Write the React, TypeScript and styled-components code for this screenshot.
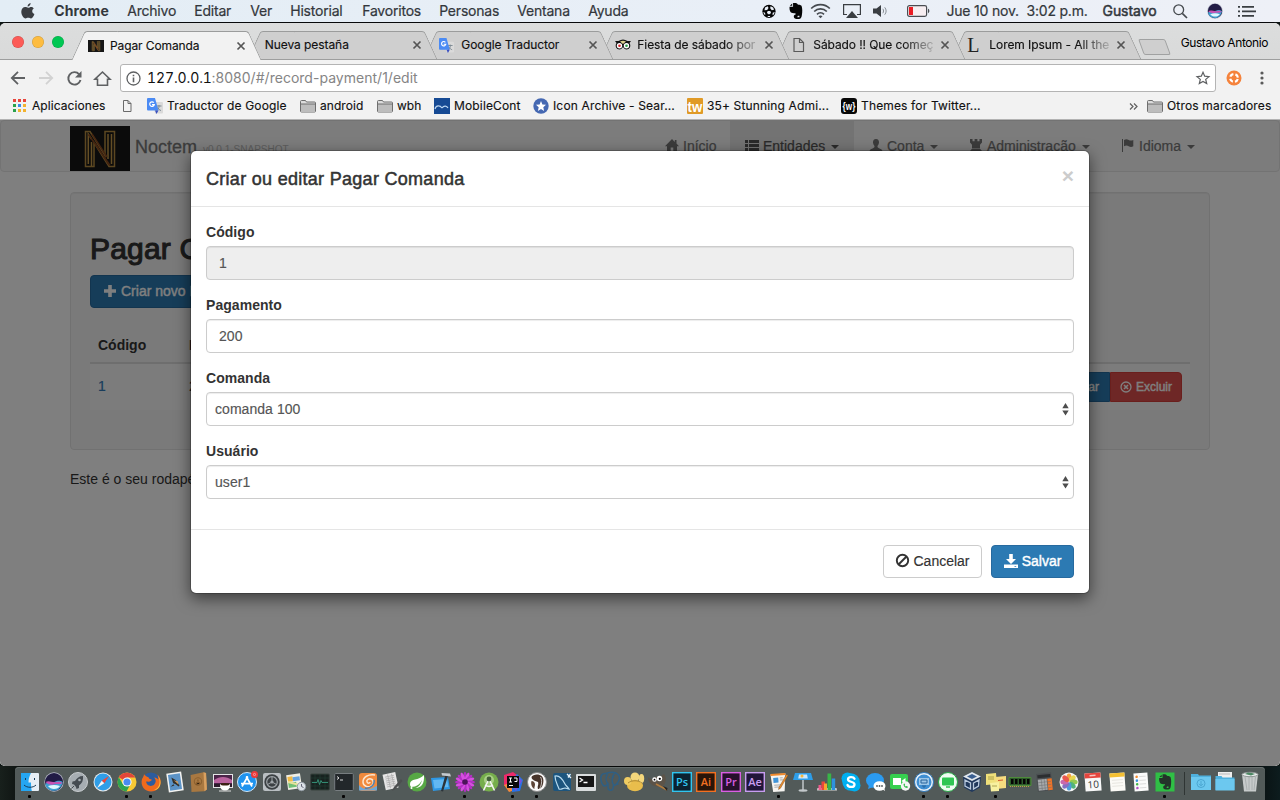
import React from "react";
import styled, { createGlobalStyle } from "styled-components";

const GlobalStyle = createGlobalStyle`
  * { box-sizing: border-box; }
  body { margin: 0; overflow: hidden; background: #101715; }
  svg { display: block; flex: none; overflow: visible; }
`;

const ui = `"Inter", "Roboto", sans-serif`;
const helv = `"Liberation Sans", "DejaVu Sans", sans-serif`;

const Desktop = styled.div`
  width: 1280px;
  height: 800px;
  overflow: hidden;
  display: flex;
  flex-direction: column;
  background: #0e1614;
`;

/* ---------- macOS menu bar ---------- */
const MenuBar = styled.div`
  height: 22px;
  flex: none;
  display: flex;
  align-items: center;
  padding-left: 20.7px;
  background: linear-gradient(90deg, #e3edf5, #e9eff7 60%, #eef0f7);
  font: 14px/22px ${ui};
  color: #33373c;
  white-space: nowrap;
`;
const MenuItem = styled.span<{ $w: number; $bold?: boolean }>`
  flex: none;
  width: ${(p) => p.$w}px;
  height: 22px;
  display: flex;
  align-items: center;
  letter-spacing: ${(p) => (p.$bold ? "0.1px" : "-0.2px")};
  font-weight: ${(p) => (p.$bold ? 700 : 400)};
  -webkit-text-stroke: ${(p) => (p.$bold ? "0" : "0.2px #33373c")};
`;
const UserItem = styled(MenuItem)`
  letter-spacing: -0.05px;
  -webkit-text-stroke: 0.5px #33373c;
`;

/* ---------- Browser window ---------- */
const Window = styled.div`
  height: 744px;
  flex: none;
  display: flex;
  flex-direction: column;
  border-top: 1px solid #08090b;
  border-radius: 6px 6px 5px 5px;
  overflow: hidden;
  background: #fff;
`;
const TabStrip = styled.div`
  height: 37px;
  flex: none;
  display: flex;
  align-items: flex-end;
  position: relative;
  background: linear-gradient(#dcdddd, #d9dada);
  border-bottom: 1px solid #9d9e9e;
`;
const TrafficLights = styled.div`
  display: flex;
  gap: 8px;
  width: 72px;
  padding-left: 12px;
  align-self: flex-start;
  margin-top: 13px;
  flex: none;
`;
const Light = styled.i<{ $c: string }>`
  width: 12px;
  height: 12px;
  border-radius: 50%;
  background: ${(p) => p.$c};
  box-shadow: inset 0 0 0 0.5px rgba(0, 0, 0, 0.18);
`;
const Tab = styled.div<{ $active?: boolean; $z: number }>`
  position: relative;
  z-index: ${(p) => p.$z};
  flex: none;
  width: 189px;
  height: ${(p) => (p.$active ? 29 : 28)}px;
  margin-right: -13px;
  margin-bottom: ${(p) => (p.$active ? -1 : 0)}px;
  padding: 0 17.5px 0 ${(p) => (p.$active ? 16 : 15.3)}px;
  display: flex;
  align-items: center;
  font: 12px/28px ${ui};
  color: #111;
  &::before,
  &::after {
    content: "";
    position: absolute;
    z-index: -1;
    top: 0;
    bottom: 0;
    background: ${(p) => (p.$active ? "#f2f2f2" : "#cfcfcf")};
    border-top: 1px solid #9b9c9c;
  }
  &::before {
    left: 6px;
    width: 100px;
    border-left: 1px solid #9b9c9c;
    border-top-left-radius: 3px;
    transform: skewX(-24.5deg);
  }
  &::after {
    right: 6px;
    width: 130px;
    border-right: 1px solid #9b9c9c;
    border-top-right-radius: 3px;
    transform: skewX(24.5deg);
  }
`;
const TabIcon = styled.span`
  width: 22px;
  flex: none;
`;
const TabTitle = styled.span<{ $fade?: boolean; $ls?: number; $start?: boolean }>`
  flex: 1;
  min-width: 0;
  margin-left: ${(p) => (p.$start ? 1.5 : 0)}px;
  overflow: hidden;
  white-space: nowrap;
  letter-spacing: ${(p) => p.$ls ?? -0.07}px;
  -webkit-text-stroke: 0.15px #111;
  ${(p) => p.$fade && "mask-image: linear-gradient(90deg, #000 72%, transparent 102%);"}
`;
const TabClose = styled.span`
  width: 12px;
  margin-right: -1px;
  flex: none;
  display: flex;
  justify-content: flex-end;
  align-items: center;
`;
const LetterIcon = styled.span`
  display: block;
  font: 20px/28px "Liberation Serif", serif;
  color: #222;
`;
const NewTab = styled.i`
  width: 27px;
  height: 16px;
  margin: 0 0 4px 13px;
  flex: none;
  border: 1px solid #a0a1a1;
  border-radius: 2px;
  background: #cfcfcf;
  transform: skewX(20deg);
`;
const Profile = styled.span`
  margin-left: auto;
  margin-right: 12px;
  padding-bottom: 7px;
  font: 12px/18px ${ui};
  letter-spacing: -0.42px;
  white-space: nowrap;
  color: #000;
`;
const Toolbar = styled.div`
  height: 36px;
  flex: none;
  display: flex;
  align-items: center;
  padding-left: 10px;
  background: #f2f2f2;
`;
const NavButton = styled.span<{ $w: number }>`
  width: ${(p) => p.$w}px;
  flex: none;
`;
const Omnibox = styled.div`
  width: 1096px;
  height: 28px;
  flex: none;
  display: flex;
  align-items: center;
  padding: 0 5px 0 5px;
  border: 1px solid #b4b4b4;
  border-radius: 3px;
  background: #fff;
  font: 14px/26px ${ui};
  color: #858585;
`;
const Host = styled.span`
  width: 64.5px;
  margin-left: 6px;
  color: #111;
  font-feature-settings: "tnum";
  letter-spacing: -0.1px;
`;
const Path = styled.span`
  flex: 1;
  letter-spacing: 0.02px;
`;
const Extensions = styled.div`
  display: flex;
  align-items: center;
  gap: 18px;
  padding-left: 10px;
`;
const Bookmarks = styled.div`
  height: 24px;
  flex: none;
  display: flex;
  align-items: center;
  padding: 0 0 3px 12px;
  background: #f2f2f2;
  border-bottom: 1px solid #b3b3b3;
  font: 12px/16px ${ui};
  color: #111;
`;
const Bookmark = styled.span<{ $w?: number; $ls?: number }>`
  width: ${(p) => (p.$w ? p.$w + "px" : "auto")};
  flex: none;
  display: flex;
  align-items: center;
  gap: 4px;
  white-space: nowrap;
  letter-spacing: ${(p) => p.$ls ?? 0.15}px;
  -webkit-text-stroke: 0.15px #111;
`;
const Spacer = styled.span`
  flex: 1;
`;

/* ---------- Page ---------- */
const Viewport = styled.div`
  position: relative;
  flex: 1;
  min-height: 0;
  overflow: hidden;
  background: #fff;
  font: 14px/20px ${helv};
  color: #333;
`;
const Navbar = styled.nav`
  height: 52px;
  display: flex;
  padding-left: 69px;
  background: #f8f8f8;
  border: 1px solid #e7e7e7;
  border-radius: 4px;
  white-space: nowrap;
`;
const Brand = styled.div`
  display: flex;
  align-items: flex-start;
  width: 580px;
  padding-top: 5px;
  font-size: 18px;
  color: #777;
`;
const BrandName = styled.span`
  margin: 11px 0 0 5px;
  -webkit-text-stroke: 0.3px #777;
`;
const Version = styled.small`
  margin: 14px 0 0 6px;
  font-size: 10px;
  color: #bbb;
`;
const NavLink = styled.a<{ $w: number; $active?: boolean }>`
  width: ${(p) => p.$w}px;
  height: 50px;
  padding-left: 15px;
  display: flex;
  align-items: center;
  gap: 4px;
  color: ${(p) => (p.$active ? "#555" : "#777")};
  background: ${(p) => (p.$active ? "#e7e7e7" : "transparent")};
  -webkit-text-stroke: 0.2px currentColor;
`;
const Caret = styled.i`
  margin: 2px 0 0 2px;
  border: 4px solid transparent;
  border-bottom: 0;
  border-top-color: currentColor;
`;
const Well = styled.section`
  margin: 20px 70px 0;
  height: 258px;
  padding: 39px 19px 0;
  background: #f5f5f5;
  border: 1px solid #e3e3e3;
  border-radius: 4px;
  box-shadow: inset 0 1px 1px rgba(0, 0, 0, 0.05);
`;
const Heading = styled.h2`
  margin: 0 0 10px;
  font: 30px/33px ${helv};
  letter-spacing: 0.2px;
  -webkit-text-stroke: 1.1px #333;
`;
const Button = styled.button<{ $kind?: "primary" | "danger"; $w?: number; $small?: boolean }>`
  display: inline-flex;
  align-items: center;
  justify-content: center;
  gap: 4px;
  flex: none;
  width: ${(p) => (p.$w ? p.$w + "px" : "auto")};
  height: ${(p) => (p.$small ? 30 : 33)}px;
  padding: ${(p) => (p.$small ? "0 10px" : "0 12px 2px")};
  white-space: nowrap;
  font: ${(p) => (p.$small ? 12 : 14)}px/20px ${helv};
  border: 1px solid
    ${(p) => (p.$kind === "primary" ? "#276a9f" : p.$kind === "danger" ? "#d43f3a" : "#ccc")};
  border-radius: 4px;
  background: ${(p) => (p.$kind === "primary" ? "#2c7ab3" : p.$kind === "danger" ? "#dd4f4c" : "#fff")};
  color: ${(p) => (p.$kind ? "#fff" : "#333")};
  -webkit-text-stroke: ${(p) => (p.$kind ? "0.4px #fff" : "0.15px #333")};
`;
const Group = styled.div`
  display: flex;
  justify-content: flex-end;
  & > button:first-child { border-radius: 4px 0 0 4px; }
  & > button:last-child { border-radius: 0 4px 4px 0; }
`;
const Table = styled.div`
  margin-top: 19px;
`;
const Row = styled.div<{ $head?: boolean }>`
  display: grid;
  grid-template-columns: 91px 200px 1fr;
  padding: 8px;
  height: ${(p) => (p.$head ? 37 : 46)}px;
  font-weight: ${(p) => (p.$head ? 700 : 400)};
  border-bottom: ${(p) => (p.$head ? "2px solid #ddd" : "0")};
  background: ${(p) => (p.$head ? "transparent" : "#f9f9f9")};
  align-items: start;
`;
const Cell = styled.span`
  padding-top: 4px;
`;
const IdLink = styled.a`
  padding-top: 4px;
  color: #337ab7;
  -webkit-text-stroke: 0.2px #337ab7;
`;
const PageFooter = styled.p`
  margin: 19px 70px 0;
`;

/* ---------- Modal ---------- */
const Backdrop = styled.div`
  position: absolute;
  inset: 0;
  display: flex;
  justify-content: center;
  align-items: flex-start;
  padding-top: 30px;
  background: rgba(0, 0, 0, 0.5);
`;
const Dialog = styled.div`
  width: 900px;
  height: 444px;
  display: flex;
  flex-direction: column;
  border: 1px solid rgba(0, 0, 0, 0.2);
  border-radius: 6px;
  background: #fff;
  background-clip: padding-box;
  box-shadow: 0 5px 15px rgba(0, 0, 0, 0.5);
`;
const DialogHeader = styled.header`
  height: 56px;
  padding: 15px;
  display: flex;
  justify-content: space-between;
  border-bottom: 1px solid #e5e5e5;
`;
const DialogTitle = styled.h4`
  margin: 0;
  font: 18px/26px ${helv};
  letter-spacing: 0.29px;
  -webkit-text-stroke: 0.5px #333;
`;
const DialogClose = styled.span`
  margin-top: -1px;
  font: bold 21px/21px ${helv};
  color: #ccc;
`;
const DialogBody = styled.div`
  height: 322px;
  padding: 15px 15px 0;
`;
const Field = styled.label`
  display: block;
  margin-bottom: 15px;
  height: 58px;
  font-weight: 700;
  letter-spacing: 0.05px;
`;
const Control = styled.div<{ $readOnly?: boolean; $select?: boolean }>`
  height: 34px;
  margin-top: 4px;
  padding: 0 ${(p) => (p.$select ? 4 : 12)}px 0 ${(p) => (p.$select ? 8 : 12)}px;
  display: flex;
  align-items: center;
  justify-content: space-between;
  border: 1px solid #ccc;
  border-radius: 4px;
  box-shadow: inset 0 1px 1px rgba(0, 0, 0, 0.075);
  background: ${(p) => (p.$readOnly ? "#eee" : "#fff")};
  color: #555;
  font-weight: 400;
  letter-spacing: 0.05px;
  -webkit-text-stroke: 0.15px #555;
`;
const DialogFooter = styled.footer`
  flex: 1;
  padding: 15px;
  display: flex;
  gap: 9px;
  justify-content: flex-end;
  border-top: 1px solid #e5e5e5;
`;

/* ---------- Dock ---------- */
const DockArea = styled.div`
  flex: 1;
  padding: 1px 15px 0;
  background: linear-gradient(90deg, #18201c, #060808 3%, #060808 97%, #0d1c1e);
`;
const DockShelf = styled.div`
  height: 33px;
  display: flex;
  padding-left: 3px;
  border-radius: 4px 4px 0 0;
  background: #525a59;
  box-shadow: inset 0 1px 0 #68706f;
`;
const DockItem = styled.span<{ $open?: boolean; $w?: number }>`
  position: relative;
  width: ${(p) => p.$w ?? 24.17}px;
  flex: none;
  height: 33px;
  padding-top: 5px;
  display: flex;
  justify-content: center;
  &::after {
    content: "";
    position: absolute;
    left: calc(50% - 2px);
    top: 28px;
    width: 3px;
    height: 3px;
    border-radius: 1px;
    background: ${(p) => (p.$open ? "#050505" : "transparent")};
  }
`;
const DockDivider = styled.i`
  width: 1px;
  height: 23px;
  margin: 5px 4px 0 6px;
  background: #2f3534;
`;

/* ---------- Shared glyphs ---------- */
const Cross = () => (
  <svg width="8" height="8" viewBox="0 0 8 8" stroke="#555" strokeWidth="1.700"><path d="M.5.5l7 7M7.500.5l-7 7" /></svg>
);
const Translate = ({ s = 16 }: { s?: number }) => (
  <svg width={s} height={s} viewBox="0 0 16 16">
    <path d="M6 4h9a1 1 0 0 1 1 1v9.500a1 1 0 0 1-1 1H8z" fill="#dadada" />
    <path d="M9.500 8h5M12 7v1.500c0 2-1 3.500-2.500 4M10.500 9.500c.8 1.500 2 2.600 3.500 3" stroke="#7d8a93" fill="none" />
    <path d="M1 0h7l3.500 12.500H1a1 1 0 0 1-1-1V1a1 1 0 0 1 1-1z" fill="#4b8bf4" />
    <path d="M8 12.500h3.500L9.500 16z" fill="#3b50c0" />
    <path d="M6.800 4.600a2.300 2.300 0 1 0 .5 2H5" stroke="#fff" strokeWidth="1.200" fill="none" />
  </svg>
);
const Page = () => (
  <svg width="16" height="16" viewBox="0 0 16 16" fill="none" stroke="#5a5a5a" strokeWidth="1.200"><path d="M3 1.500h5.500l4 4v9H3zM8.500 1.500v4h4" /></svg>
);
const SmallPage = () => (
  <svg width="10" height="14" viewBox="0 0 10 14" fill="none" stroke="#6a6a6a"><path d="M1.500 1.500h4.500l3 3v8H1.500zM6 1.500v3h3" /></svg>
);
const Folder = () => (
  <svg width="16" height="14" viewBox="0 0 16 14" stroke="#6e6e6e"><path d="M.5 12V2.500a1 1 0 0 1 1-1h4l1 1.500h8a1 1 0 0 1 1 1v8a1 1 0 0 1-1 1h-13a1 1 0 0 1-1-1z" fill="#dcdcdc" /><path d="M1 5h14v8H1z" fill="#bdbdbd" stroke="none" /><path d="M.5 5h15" /></svg>
);
const Logo = ({ w, h }: { w: number; h: number }) => (
  <svg width={w} height={h} viewBox="0 0 60 45" fill="none" strokeWidth="1.500">
    <path d="M0 0h60v45H0z" fill="#161616" />
    <path d="M15.500 40.500V5.500h4.500l15 24V5.500h9.500v35h-5.500l-15-24v24z" stroke="#b98f42" />
    <path d="M18.300 38V8l3.200 5M21.500 40V16M38 33V8M41.500 38V8" stroke="#c99c4a" />
    <path d="M18.500 8.500L40 39.500M22 8l15 23M25 17l14 22" stroke="#8a4a20" />
  </svg>
);
const Elephant = ({ c }: { c: string }) => (
  <path d="M5.500 1v3.500H2.200C2 6 2.200 8.500 3.500 10c1.500.8 3 .8 4.300.6V12c-.9 0-1.700.6-1.600 1.800 0 1.300 1 2.200 2.600 2.200H11c2-.1 2.500-1.500 2.800-3.500.6-3.500.6-6-.3-9-1-.9-2.400-1-3.500-1.200C9.200.9 7.500.6 5.500 1zM2.400 3.600L4.700 1.300v2.300zM10 13h1.500v1.500H9.500z" fill={c} fillRule="evenodd" />
);
const SiriBall = () => (
  <>
    <circle cx="10" cy="10" r="9.700" fill="#b9bccb" />
    <circle cx="10" cy="10" r="9" fill="#211b45" />
    <path d="M1.300 12c4-3 6-1 9-2s5-2 8.300 0c-.5 5-4.500 8.800-8.600 8.800S2 16.500 1.300 12z" fill="#3f9fd0" />
    <path d="M1.500 10c4-2 7 1 11 0 3-.5 4 0 6 1-3 2-6 .5-9 1.500s-6-.5-8-2.500z" fill="#c752b4" />
    <path d="M4 14c4-1.500 8-1.500 12 0-2 3.500-9 4.500-12 0z" fill="#dff8ff" />
  </>
);

/* ---------- Page glyphs ---------- */
const G = ({ d, w = 14, h = 14, children }: { d?: string; w?: number; h?: number; children?: React.ReactNode }) => (
  <svg width={w} height={h} viewBox={`0 0 ${w} ${h}`} fill="currentColor">{d && <path d={d} fillRule="evenodd" />}{children}</svg>
);
const HOME = "M7 0L0 7.200h2V13h3.700V8.500h2.600V13H12V7.200h2L11.500 4.600V1H9.800v1.900z";
const LIST = "M0 1h3v3H0zM4 1h10v3H4zM0 5h3v3H0zM4 5h10v3H4zM0 9h3v3H0zM4 9h10v3H4z";
const USER = "M7 0C4.800 0 3.900 1.500 4 3.600c.1 1.600.8 2.700 1.500 3.500 0 1-.1 1.500-1 2C2.500 10 .6 10.500.4 13h13.200c-.2-2.500-2.100-3-4.100-3.900-.9-.5-1-1-1-2C9.200 6.300 9.900 5.200 10 3.600 10.100 1.500 9.200 0 7 0z";
const TOWER = "M1 0h2.500v2.300H5.600V0h2.800v2.300h2.100V0H13v3.500L11 5.800v3.400H3V5.800L1 3.500zM3 9.800h8L13 12v1.500H1V12z";
const FLAG = "M1 0h1v13H1zM3 1c2-1.200 3.300-.8 4.700 0S10.500 1.800 12.300 1v6.300c-1.600 1-3.200.8-4.600 0S5 6.100 3 7.300z";
const PLUS = "M5.200 1h3.600v4.200H13v3.600H8.800V13H5.200V8.800H1V5.200h4.200z";
const SAVE = "M5.200 0h3.600v5H12L7 10 2 5h3.200zM0 10.500h14V14H0zM10.500 12v.8h1.700V12z";

/* ---------- Dock icons, drawn on a 20 × 20 grid ---------- */
const Adobe = ({ t, c, b }: { t: string; c: string; b: string }) => (
  <>
    <rect x=".7" y=".7" width="18.600" height="18.600" fill={b} stroke={c} strokeWidth="1.400" />
    <text x="10" y="14" textAnchor="middle" fontFamily="Open Sans, sans-serif" fontWeight="600" fontSize="11" fill={c}>{t}</text>
  </>
);
const Tile = ({ c, r = 2 }: { c: string; r?: number }) => <rect x="1" y="1" width="18" height="18" rx={r} fill={c} />;
const Disc = ({ c, s = "none" }: { c: string; s?: string }) => <circle cx="10" cy="10" r="9.500" fill={c} stroke={s} />;
const petals = (n: number, colors: string[], rx: number, ry: number, off: number) =>
  Array.from({ length: n }, (_, i) => (
    <ellipse key={i} cx="10" cy={10 - off} rx={rx} ry={ry} fill={colors[i % colors.length]} transform={`rotate(${(i * 360) / n} 10 10)`} />
  ));

const dock: { icon: React.ReactNode; open?: boolean }[] = [
  { open: true, icon: <><Tile c="#e6eef5" r={1} /><path d="M1 1h10c-2 4-2.500 6-2.500 9.500H11c0 3 .2 6 .8 8.500H1z" fill="#25a6f2" /><path d="M5.500 6v2M14.500 6v2M4 13c3 3 9 3 12 0" stroke="#173a58" fill="none" /></> },
  { icon: <SiriBall /> },
  { icon: <><Disc c="#a6adb2" s="#c9cdd0" /><path d="M15 4c-4 0-6 2-8 5l-2.500.5L4 12l2 .5L8 15l.5 2 2.500-1v-2.500c3-2 4.500-5 4-9.500z" fill="#454c52" /><circle cx="11.500" cy="8" r="1.300" fill="#a6adb2" /><path d="M6 14l-2.500 2.500" stroke="#454c52" /></> },
  { icon: <><Disc c="#e8ebee" /><circle cx="10" cy="10" r="8.500" fill="#2f9ee8" /><path d="M16 4l-4.700 7.300-2.600-2.600z" fill="#f04438" /><path d="M4 16l4.700-7.300 2.600 2.600z" fill="#f6f6f6" /></> },
  { open: true, icon: <><Disc c="#f7c934" /><path d="M10 10L1.800 5.200A9.500 9.500 0 0 1 18.200 5.500H10z" fill="#e2463a" /><path d="M1.800 5.200A9.500 9.500 0 0 0 9.500 19.500L13.500 12 10 10 5.800 12z" fill="#2fa350" /><circle cx="10" cy="10" r="4.600" fill="#fff" /><circle cx="10" cy="10" r="3.600" fill="#4a8bf0" /></> },
  { open: true, icon: <><Disc c="#2c5c9e" /><path d="M3 2c0 2-1 3-2 5-2 7 3 12.500 9 12.500S20 15 19.700 9c-.2-3-1.500-5-3.500-6.500 1 2 1.200 3 1 5-1-1-2-2-4-2 2 2 2 5 0 7-3 3-8 1-8-3 1 0 2 .5 3.500 0 1-.5 2-1 2-2-1-.2-3-.5-3-2-1-1-3-.8-4.700-3.500z" fill="#ef6a1c" /><path d="M17 4c3 5 2 12-4 14 6 0 9-8 4-14z" fill="#ffc33a" /></> },
  { icon: <g transform="rotate(-8 10 10)"><path d="M2.500.500h15v19h-15z" fill="#f3f3f1" /><path d="M4 2h12v16H4z" fill="#5b93c7" /><path d="M7 5l4 3 3 6-1 1-3-3-2-1zM8 12l-3 2 4-.5z" fill="#33302b" /><path d="M9 8l4 2v3z" fill="#c79a62" /></g> },
  { icon: <g transform="rotate(-3 10 10)"><path d="M2 2.500l13-2 2.500 1V18l-2.500 1.500H2z" fill="#a87841" /><path d="M15 .5l2.500 1V18L15 19.500z" fill="#d8a060" /><circle cx="9" cy="9.500" r="3.700" fill="none" stroke="#8a5f2e" /><path d="M7 12c.4-2 3.600-2 4 0M9 7.500v2" stroke="#8a5f2e" strokeWidth="1.500" /></g> },
  { icon: <><path d="M0 2h20v14H0z" fill="#e4e4e6" /><path d="M1 3h18v12H1z" fill="#4a2448" /><path d="M1 8c6-4 12-4 18 0v3H1z" fill="#b9639e" /><path d="M1 12h18v3H1z" fill="#2d1b2c" /><path d="M7 12h10c0 5-2 6.500-5 6.500S7 17 7 12z" fill="#fff" /><ellipse cx="12" cy="12.300" rx="4.600" ry="1.300" fill="#3b2113" /><path d="M6 19h12" stroke="#ddd" /></> },
  { icon: <><Disc c="#1f93ee" s="#cfe6fa" /><path d="M5 14.500L10.800 4.500M9.200 4.500L15 14.500M4 11.700h12" stroke="#fff" strokeWidth="1.700" /><circle cx="17.500" cy="2.500" r="3.500" fill="#ea3a3a" /><circle cx="17.500" cy="2.500" r="1.100" fill="none" stroke="#fbb" strokeWidth=".7" /></> },
  { icon: <><Tile c="#b9bec2" /><circle cx="10" cy="10" r="7.700" fill="#3b4043" /><circle cx="10" cy="10" r="5.300" fill="none" stroke="#9fa5a9" strokeWidth="1.200" /><path d="M10 10V5M10 10l4.500 2.500M10 10l-4.500 2.500" stroke="#9fa5a9" /><circle cx="10" cy="10" r="1.600" fill="#9fa5a9" /></> },
  { icon: <><g transform="rotate(-8 9 9)"><path d="M1 2h14v15H1z" fill="#f0efe5" /><path d="M2 4h5v5H2z" fill="#f3bb45" /><path d="M7 5h7v4H7z" fill="#67a5e2" /><path d="M2 10h8v5H2z" fill="#70bf74" /><path d="M2 9l12 5" stroke="#e8e29c" strokeWidth="2" /></g><circle cx="15.500" cy="14.500" r="4.200" fill="#dde3e8" stroke="#929ba3" /><path d="M15.500 12v2.500l2 1" stroke="#667" fill="none" /></> },
  { icon: <><rect x=".7" y="2" width="18.600" height="16" rx="1" fill="#17221f" stroke="#39423f" /><path d="M1 6h18M1 10h18M1 14h18M5 2v16M10 2v16M15 2v16" stroke="#26463b" strokeWidth=".5" /><path d="M2 10.500h5l1-3 1.500 5 1.500-4 1 2h6" fill="none" stroke="#35957a" strokeWidth=".9" /></> },
  { open: true, icon: <><rect x=".7" y="1.500" width="18.600" height="17" rx="1" fill="#22272a" stroke="#777d80" /><path d="M3 4.500l2 1.500-2 1.500M6 8h3" fill="none" stroke="#eee" strokeWidth=".9" /></> },
  { icon: <><Tile c="#f08a3d" r={3} /><path d="M1 13c3 4 8 5 11 4l7-3v4.500H1z" fill="#6fa6d4" /><path d="M17 3c-7-1-12 2-12 7 0 4 5 6 8 4 3-1 3-6 0-7-2-1-5 1-4 3s3 1 3 0" fill="none" stroke="#fbe6cf" strokeWidth="1.500" /><path d="M16 8c1 5-4 9-9 8" fill="none" stroke="#4f7fb0" strokeWidth="1.500" /></> },
  { icon: <><g transform="rotate(-12 9 9)"><path d="M2 1h13v16H2z" fill="#e6e6e6" /><path d="M4 4h9M4 6h9M4 8h9M4 10h9M4 12h9M4 14h9M7 2v14M11 2v14" stroke="#b0b0b0" strokeWidth=".8" /></g><path d="M19 7l-7 8-2 4 3.500-2 7-8z" fill="#4d4f50" /></> },
  { icon: <><Disc c="#57a845" /><path d="M17 3c.5 8-2 13-9 13-3 0-5-1-5-4 0-6 9-3 14-9z" fill="#fff" /><path d="M4 15c6 0 9-3 11-7-1 5-5 9-10 8.500z" fill="#57a845" /><circle cx="4.500" cy="16" r="1" fill="#fff" /></> },
  { icon: <><path d="M0 6l17-1 2 12-17 2z" fill="#2e97e4" /><path d="M2 8l14-1 1.500 8L3.500 16.500z" fill="#62b8f2" /><path d="M14.500 2.500L10 19l2 .5 5-15.500z" fill="#2b333a" /><path d="M10.500 1L19 1.500l1 3-9-1z" fill="#c3c9ce" /></> },
  { open: true, icon: <>{petals(16, ["#b32fc4", "#d64fe0"], 1.600, 4.700, 5.200)}<circle cx="10" cy="10" r="2.800" fill="#4b1459" /></> },
  { icon: <><Disc c="#76ae4c" /><circle cx="10" cy="8" r="5" fill="#a8cf86" /><path d="M10 7L4.500 18.500M10 7l5.500 11.500M6 13c3 2 5 2 8 0" stroke="#f4f4f4" strokeWidth="1.600" fill="none" /><circle cx="10" cy="7" r="2.400" fill="#43603a" /></> },
  { open: true, icon: <><path d="M1 3l9-3 4 3-6 10-7 1z" fill="#ee2a6b" /><path d="M1 13l8-3 3 8-6 2z" fill="#f5893b" /><path d="M14 2l6 6-3 11-8 1V8z" fill="#2573e8" /><path d="M7 12l9-7 3 4-6 10z" fill="#7952d8" /><path d="M4 4h12v12H4z" fill="#0a0a0a" /><path d="M6 6h3M7.500 6v4M6 10h3M11 6h3v3.500H11.500M6 13.500h4" stroke="#fff" fill="none" /></> },
  { open: true, icon: <><Disc c="#fafafa" s="#8a8a8a" /><path d="M4.500 5c1-2 5-3 8-2 4 1 4.500 5 3.500 9-1 4-3 5-5 5-1-3 1-4 0-7l-4-1.500c-1-1-2.500-1.500-2.500-3.500z" fill="#47342a" /><path d="M4.500 9c2 0 3.500 1.500 3.500 3.500s-1 3-.5 4.500C5 16 3.500 12 4.500 9z" fill="#5c4436" /><path d="M13.500 5c2 3 1 9-1 12" stroke="#fff" strokeWidth=".7" fill="none" /></> },
  { icon: <><Tile c="#1d557e" /><path d="M3 4c5-1 8 4 10 8 1 2 3 3 4 5l-4-1c-2 0-4 2-6 1-1-4-4-7-4-13z" fill="none" stroke="#b9dcf0" strokeWidth="1.200" /><path d="M15 2l4 4M18.500 2L16 5.500" stroke="#e8f3fa" strokeWidth="1.300" /></> },
  { icon: <><rect x="0" y="2" width="20" height="17" rx="1" fill="#d9dcdd" /><path d="M2 4h16v11H2z" fill="#161616" /><path d="M3.500 6l3 2-3 2M7.500 10.500h4" stroke="#fff" fill="none" strokeWidth="1.300" /></> },
  { icon: <><path d="M6 1.500C2 1 0 4 1 8c.7 4 2 6 4 6 1 0 2-1.500 2.500-2.500M6 1.500C9 .5 15-.5 18 2.500s1 7-2 10c-1 1-2.500 1-2.500 1M7.500 2c-2 3-2 7 .5 9.500v4c0 3 4 4 5 1l.5-4c-2-2-2-8 1-11M9 5.500h1M13 5h1M16 12.500l2.500-.5" stroke="#2f5f83" strokeWidth="1.500" fill="none" /></> },
  { icon: <><ellipse cx="11" cy="5" rx="4.500" ry="4.500" fill="#f4d77c" /><ellipse cx="11" cy="13.500" rx="8" ry="5.800" fill="#e9bd4c" /><ellipse cx="3.700" cy="9" rx="3.700" ry="4" fill="#f0cc62" /><ellipse cx="17.500" cy="6.500" rx="2.700" ry="4.500" fill="#f4d77c" /><path d="M4 11c4-3 10-3 14 0" stroke="#9d792a" strokeWidth=".8" fill="none" /></> },
  { icon: <><path d="M0 5c2 2 3 2 5 2.500L7 5l6-1 3-2c3 4 2 9-1 12-4 1-9 1-12-2C1 10 0 8 0 5z" fill="#5c5348" /><circle cx="6.500" cy="7.500" r="2.200" fill="#fff" /><circle cx="11.500" cy="6.500" r="2.700" fill="#fff" /><circle cx="11.800" cy="6.800" r="1.100" /><circle cx="6.500" cy="7.700" r=".9" /><path d="M8 12l11 6" stroke="#b27b3d" strokeWidth="1.500" /><path d="M15 14l4 5 .5-3z" fill="#242424" /></> },
  { icon: <Adobe t="Ps" c="#31c5f0" b="#0c2230" /> },
  { icon: <Adobe t="Ai" c="#f37021" b="#2a1509" /> },
  { icon: <Adobe t="Pr" c="#d95fe3" b="#27102c" /> },
  { icon: <Adobe t="Ae" c="#c79df0" b="#21153a" /> },
  { open: true, icon: <g transform="rotate(-4 10 10)"><path d="M2 2h15l-2 17.500H3.500z" fill="#f6f4f0" /><path d="M2 1.500h15v2H2z" fill="#f08a2d" /><path d="M4.500 5.500h5v5h-5z" fill="#3f94d8" /><path d="M11 6h3M11 8h3M5 13h8M5 15h7" stroke="#aaa" /><path d="M18 3L9.500 15.500l-.5 2 2-1.200L19.500 4z" fill="#eb8c2c" stroke="#724415" strokeWidth=".4" /></g> },
  { icon: <><path d="M2 1h16l2 7H0z" fill="#2d9de8" /><path d="M6 2.500h8l.8 4H5.200z" fill="#cfe9fb" /><circle cx="9" cy="4" r="1.500" fill="#f4b63c" /><path d="M9.300 8h1.400v10H9.300z" fill="#c9ced2" /><ellipse cx="10" cy="18.500" rx="4.500" ry="1.200" fill="#c3c8cb" /></> },
  { icon: <><path d="M.5 16h19l.5 2.500H0z" fill="#d8d8d8" /><path d="M1.500 13h3v5h-3z" fill="#ee5a8c" /><path d="M4.500 9.500h3.500V18H4.500z" fill="#e9463c" /><path d="M7 11.500h3V18H7z" fill="#f6a72c" /><path d="M10.500 1.500h3.700V18h-3.700z" fill="#38b548" /><path d="M14.700 6.500h3.500V18h-3.500z" fill="#2e93df" /></> },
  { icon: <><circle cx="6.500" cy="6.500" r="6" fill="#00aff0" /><circle cx="13.500" cy="13.500" r="6" fill="#00aff0" /><circle cx="10" cy="10" r="8.700" fill="#00aff0" /><path d="M13.500 6.800C12.500 4.500 7 4.500 7 7.500S13.500 9 13.500 12.400 7.500 15.500 6.500 13" stroke="#fff" strokeWidth="2.300" fill="none" strokeLinecap="round" /></> },
  { icon: <><ellipse cx="9" cy="8.500" rx="9" ry="7.500" fill="#2b9bf1" /><path d="M3 13l-1 4 5-2z" fill="#2b9bf1" /><ellipse cx="13.500" cy="14" rx="6" ry="4.800" fill="#fff" /><path d="M16 17l3 2-1-4z" fill="#fff" /><g fill="#52585c"><circle cx="11" cy="14" r=".9" /><circle cx="13.500" cy="14" r=".9" /><circle cx="16" cy="14" r=".9" /></g></> },
  { icon: <><rect x="0" y="2" width="18" height="15" rx="2" fill="#36cf4f" /><path d="M3 6h8v7H3zM11.500 9l4-3v6z" fill="#fff" /><circle cx="15.500" cy="14" r="4.700" fill="#f3f5f3" /><path d="M13.500 12c0 2.500 1.500 4 4 4l.3-1.500-1.500-.6-.6.5-1-1 .4-.7-.5-1.200z" fill="#35b94c" /></> },
  { open: true, icon: <><Disc c="#e7f0f7" s="#2e78bb" /><circle cx="10" cy="10" r="7.500" fill="#3f8fd3" /><path d="M5 6h10v7H5z" fill="#9cc6e8" /><path d="M7 8h6v3H7zM9 13v2h2v-2" stroke="#28659c" fill="none" /></> },
  { open: true, icon: <><Disc c="#eafbee" s="#29a948" /><circle cx="10" cy="10" r="7.700" fill="#f1fcf3" /><rect x="4" y="5.500" width="12" height="8" rx="1" fill="#2fc653" /><path d="M8 15h4" stroke="#2fc653" strokeWidth="1.500" /></> },
  { icon: <><path d="M10 0l9 4.500-1 11L10 20l-8-4.500L1 4.500z" fill="#20385c" /><path d="M10 0l9 4.500L10 9 1 4.500z" fill="#e0e6ec" /><path d="M10 2l5 2.500L10 7 5 4.500z" fill="#3a5f91" /><path d="M3 8l5.500 3v6L3 14zM11.500 11L17 8l-.5 6-5 3z" fill="none" stroke="#b9c9dd" strokeWidth="1.300" /></> },
  { open: true, icon: <><path d="M0 2l10-1 1 11-11 1z" fill="#efe07a" /><path d="M9 5l11-1v12l-10 1z" fill="#f6dc7f" /><path d="M4 11l9-1v9l-8 .5z" fill="#f7f0a0" /><path d="M2 5h6M2 7h6M6 14h5" stroke="#9b8f3d" strokeWidth=".8" /><path d="M12 8.500l5-.5" stroke="#d2572f" /></> },
  { icon: <><path d="M-1 5.500h22v8H-1z" fill="#2c5a2a" stroke="#4f8a3b" /><path d="M1 7h2.500v5H1zM5 7h2.500v5H5zM9 7h2.500v5H9zM13 7h2.500v5H13zM17 7h2.500v5H17z" fill="#050505" /><path d="M0 14.500h20" stroke="#b8a540" strokeDasharray="1 1" /></> },
  { icon: <g transform="rotate(-6 10 10)"><path d="M2 1h15v18H2z" fill="#4b4f52" /><path d="M3 2.500h13v3H3z" fill="#2b2e30" /><path d="M3 7h9v11H3z" fill="#a6a9ab" /><path d="M12.500 7H17v11.500h-4.500z" fill="#ee7428" /><path d="M3 10h13M3 13h13M3 16h13M6.500 7v11M9.500 7v11" stroke="#6c6f71" strokeWidth=".5" /></g> },
  { icon: <><Disc c="#f5f5f5" /><g opacity=".9">{petals(8, ["#f59a2d", "#e9d53c", "#8ac440", "#3fae6e", "#3b93d6", "#7a62bd", "#c65aa5", "#e9483c"], 2.500, 4, 4.600)}</g></> },
  { icon: <g transform="rotate(-4 10 10)"><path d="M2 1h16v18H2z" fill="#f8f8f8" /><path d="M2 1h16v5H2z" fill="#e5453d" /><text x="10" y="16" textAnchor="middle" fontFamily="Open Sans, sans-serif" fontSize="10" fill="#333">10</text><path d="M7 3.500h6" stroke="#f9c3c0" strokeWidth="1.500" /></g> },
  { icon: <g transform="rotate(-4 10 10)"><path d="M3 1h15v18H3z" fill="#fbfaf6" /><path d="M3 1h15v4H3z" fill="#f4c033" /><path d="M5 8h11M5 11h11M5 14h11" stroke="#dedcd5" strokeWidth=".7" /></g> },
  { icon: <g transform="rotate(-4 10 10)"><path d="M3 1h14v18H3z" fill="#fbfbfb" /><g><circle cx="6" cy="4.500" r="1.300" fill="#f08b2e" /><circle cx="6" cy="8.300" r="1.300" fill="#3b93e0" /><circle cx="6" cy="12" r="1.300" fill="#43b649" /><circle cx="6" cy="15.800" r="1.300" fill="#b457c9" /></g><path d="M8.500 4.500H15M8.500 8.300H15M8.500 12H15M8.500 15.800H15" stroke="#d4d4d4" strokeWidth=".8" /></g> },
  { open: true, icon: <><path d="M.5.500h19v19H.5z" fill="#2fbf45" /><g transform="translate(2 1.500)"><Elephant c="#24332a" /></g></> },
];

const fields = [
  { label: "Código", value: "1", readOnly: true },
  { label: "Pagamento", value: "200" },
  { label: "Comanda", value: "comanda 100", select: true },
  { label: "Usuário", value: "user1", select: true },
];

const menus: [string, number][] = [
  ["Archivo", 67], ["Editar", 56], ["Ver", 40], ["Historial", 72], ["Favoritos", 77], ["Personas", 78], ["Ventana", 71], ["Ayuda", 174],
];

const DockIcon = ({ children }: { children: React.ReactNode }) => (
  <svg width="20" height="20" viewBox="0 0 20 20">{children}</svg>
);

function SystemMenu() {
  return (
    <MenuBar>
      <MenuItem $w={33.5}>
        <svg width="14" height="16" viewBox="0 0 14 16" fill="#3a3d41"><path d="M9.600 0c.2 1.700-1.300 3.600-3 3.500C6.400 1.900 8 .2 9.600 0zM12.800 5.500c-2.300 1.400-2 4.500.6 5.500-.5 1.700-1.900 4.400-3.400 4.500-1.100 0-1.500-.7-2.800-.7-1.300 0-1.700.6-2.700.7C2.600 15.500.3 12 .3 8.800c0-3 1.900-4.700 3.900-4.700 1.200 0 2 .7 3 .7.900 0 1.700-.8 3.200-.8 1 0 1.900.6 2.400 1.500z" /></svg>
      </MenuItem>
      <MenuItem $bold $w={73}>Chrome</MenuItem>
      {menus.map(([t, w]) => <MenuItem key={t} $w={w}>{t}</MenuItem>)}
      <MenuItem $w={26}>
        <svg width="14" height="14" viewBox="0 0 14 14"><circle cx="7" cy="7.300" r="6.600" fill="#050505" /><path d="M3 3.500l2.700-1.300.8 1.700-1.300 2.100-2.700.2zM8.500 2.200l2.700 1.200.8 2.300-2.200.5-1.600-2zM5.700 7l2.600-.1.800 2.100L7 10.600 4.900 9zM1.300 8l1.700.7.400 2-1.200-.2zM10.700 8.800l2-.8-.8 2.400-1.400.7zM5.500 12l2.700-.1-.3 1.200H6z" fill="#e9eff7" /></svg>
      </MenuItem>
      <MenuItem $w={22}><svg width="17" height="18" viewBox="1 0 15.500 17"><Elephant c="#050505" /></svg></MenuItem>
      <MenuItem $w={33.300}>
        <svg width="21" height="16" viewBox="0 0 21 16" fill="none" stroke="#45494e" strokeWidth="1.700"><path d="M1.200 5.500c5-5.300 13.600-5.300 18.600 0M4.200 8.500c3.500-3.600 9.100-3.600 12.600 0M7 11.300c2-1.900 5-1.900 7 0" /><path d="M10.500 15.300l-2-2c1.100-1 2.900-1 4 0z" fill="#45494e" stroke="none" /></svg>
      </MenuItem>
      <MenuItem $w={29.500}>
        <svg width="18" height="14" viewBox="0 0 18 14"><path d="M4 10.500H.6V.7h16.800v9.800H14" fill="none" stroke="#3a3e42" strokeWidth="1.200" /><path d="M9 7l6 7H3z" fill="#3a3e42" /></svg>
      </MenuItem>
      <MenuItem $w={34}>
        <svg width="15" height="12" viewBox="0 0 15 12"><path d="M0 3.500h3.500L8 0v12L3.500 8.500H0z" fill="#3a3e42" /><path d="M9.800 3.800c1 1.300 1 3.100 0 4.400M11.700 2.300c1.900 2.200 1.900 5.200 0 7.400" stroke="#8a9096" fill="none" /></svg>
      </MenuItem>
      <MenuItem $w={39.500}>
        <svg width="24" height="12" viewBox="0 0 24 12"><rect x=".6" y=".6" width="19" height="10.800" rx="1.800" fill="#f7eef1" stroke="#4a4d52" strokeWidth="1.200" /><path d="M2 2h4v8H2z" fill="#ea1c24" /><path d="M21 3.800c1.800.5 1.800 3.900 0 4.400z" fill="#4a4d52" /></svg>
      </MenuItem>
      <MenuItem $w={80}>Jue 10 nov.</MenuItem>
      <MenuItem $w={76}>3:02 p.m.</MenuItem>
      <UserItem $w={71}>Gustavo</UserItem>
      <MenuItem $w={34}>
        <svg width="15" height="15" viewBox="0 0 15 15" fill="none" stroke="#45494e"><circle cx="5.700" cy="5.700" r="4.900" strokeWidth="1.300" /><path d="M9.300 9.300l4.700 4.700" strokeWidth="1.700" /></svg>
      </MenuItem>
      <MenuItem $w={31}><svg width="16" height="16" viewBox="0 0 20 20"><SiriBall /></svg></MenuItem>
      <svg width="18" height="11" viewBox="0 0 18 11" fill="#3a3e42"><path d="M0 0h2v1.800H0zM0 4.500h2v1.800H0zM0 9h2v1.800H0zM4 0h12v1.800H4zM4 4.500h14v1.800H4zM4 9h12v1.800H4z" /></svg>
    </MenuBar>
  );
}

function Tabs() {
  return (
    <TabStrip>
      <TrafficLights><Light $c="#fc5b57" /><Light $c="#fdbc40" /><Light $c="#00c753" /></TrafficLights>
      <Tab $active $z={9}><TabIcon><Logo w={16} h={12} /></TabIcon><TabTitle $ls={-0.1}>Pagar Comanda</TabTitle><TabClose><Cross /></TabClose></Tab>
      <Tab $z={8}><TabTitle $start>Nueva pestaña</TabTitle><TabClose><Cross /></TabClose></Tab>
      <Tab $z={7}><TabIcon><Translate s={15} /></TabIcon><TabTitle>Google Traductor</TabTitle><TabClose><Cross /></TabClose></Tab>
      <Tab $z={6}>
        <TabIcon>
          <svg width="16" height="12" viewBox="0 0 16 12"><path d="M0 2h3.500c3-2 6-2 9 0H16l-1.500 2c2 3 0 6.500-3 6.500-1.500 0-2.500-1-3.500-2.500-1 1.500-2 2.500-3.500 2.500-3 0-5-3.500-3-6.500z" fill="#111" /><circle cx="4.500" cy="6.800" r="2.700" fill="#fff" /><circle cx="11.500" cy="6.800" r="2.700" fill="#fff" /><circle cx="4.500" cy="6.800" r="1.300" fill="#d8262c" /><circle cx="11.500" cy="6.800" r="1.300" fill="#2f9e49" /><path d="M5 2.500c2-1 4-1 6 0L8 5z" fill="#d9cf8c" /></svg>
        </TabIcon>
        <TabTitle $fade>Fiesta de sábado por</TabTitle><TabClose><Cross /></TabClose>
      </Tab>
      <Tab $z={5}><TabIcon><Page /></TabIcon><TabTitle $fade $ls={-0.1}>Sábado !! Que começ</TabTitle><TabClose><Cross /></TabClose></Tab>
      <Tab $z={4}>
        <TabIcon><LetterIcon>L</LetterIcon></TabIcon>
        <TabTitle $fade>Lorem Ipsum - All the</TabTitle><TabClose><Cross /></TabClose>
      </Tab>
      <NewTab />
      <Profile>Gustavo Antonio</Profile>
    </TabStrip>
  );
}

function BrowserBars() {
  return (
    <>
      <Toolbar>
        <NavButton $w={29}><svg width="16" height="14" viewBox="0 0 16 14" fill="none" stroke="#5f6163" strokeWidth="1.800"><path d="M8 .8L1.800 7 8 13.200M2 7h13" /></svg></NavButton>
        <NavButton $w={27.5}><svg width="16" height="14" viewBox="0 0 16 14" fill="none" stroke="#d2d2d2" strokeWidth="1.800"><path d="M7 .8L13.200 7 7 13.200M13 7H0" /></svg></NavButton>
        <NavButton $w={27}><svg width="15" height="15" viewBox="0 0 15 15"><path d="M12.200 3.300A6.200 6.200 0 1 0 13.500 9" fill="none" stroke="#5f6163" strokeWidth="1.900" /><path d="M14.500 0v6.500H8z" fill="#5f6163" /></svg></NavButton>
        <NavButton $w={26.5}><svg width="17" height="15" viewBox="0 0 17 15" fill="none" stroke="#5f6163" strokeWidth="1.600"><path d="M1 8.200L8.500 1 16 8.200h-2.500v6h-10v-6z" /></svg></NavButton>
        <Omnibox>
          <svg width="15" height="15" viewBox="0 0 15 15"><circle cx="7.500" cy="7.500" r="6.500" fill="none" stroke="#5f6163" strokeWidth="1.300" /><path d="M7.500 6.500v4.700M7.500 3.700v1.600" stroke="#5f6163" strokeWidth="1.600" /></svg>
          <Host>127.0.0.1</Host><Path>:8080/#/record-payment/1/edit</Path>
          <svg width="14" height="14" viewBox="0 0 14 14"><path d="M7 1.200l1.700 4 4.300.4-3.300 2.800 1 4.200L7 10.400l-3.700 2.200 1-4.200L1 5.600l4.300-.4z" fill="none" stroke="#5f6163" strokeWidth="1.200" /></svg>
        </Omnibox>
        <Extensions>
          <svg width="16" height="16" viewBox="0 0 16 16"><circle cx="8" cy="8" r="7.500" fill="#f5833c" /><circle cx="8" cy="8" r="3.900" fill="none" stroke="#fff" strokeWidth="2.200" strokeDasharray="4 2.120" transform="rotate(15 8 8)" /></svg>
          <svg width="4" height="14" viewBox="0 0 4 14" fill="#5a5a5a"><circle cx="2" cy="2" r="1.600" /><circle cx="2" cy="7" r="1.600" /><circle cx="2" cy="12" r="1.600" /></svg>
        </Extensions>
      </Toolbar>
      <Bookmarks>
        <Bookmark $w={110} $ls={0.07}>
          <svg width="16" height="14" viewBox="0 0 16 14"><path d="M1 0h3v3H1zM6 0h3v3H6zM11 0h3v3h-3z" fill="#e8453c" /><path d="M1 5h3v3H1z" fill="#2ba24c" /><path d="M6 5h3v3H6z" fill="#3b8bea" /><path d="M11 5h3v3h-3zM6 10h3v3H6zM11 10h3v3h-3z" fill="#f3b32f" /><path d="M1 10h3v3H1z" fill="#2ba24c" /></svg>
          Aplicaciones
        </Bookmark>
        <Bookmark $w={25}><SmallPage /></Bookmark>
        <Bookmark $w={153}><Translate />Traductor de Google</Bookmark>
        <Bookmark $w={77} $ls={0.05}><Folder />android</Bookmark>
        <Bookmark $w={57} $ls={0}><Folder />wbh</Bookmark>
        <Bookmark $w={99}><svg width="16" height="16" viewBox="0 0 16 16"><path d="M0 0h16v16H0z" fill="#164a94" /><path d="M1 11c1-4 5-4 7-1M8 10c2-3 5-2 6 0" stroke="#b9d4f0" fill="none" strokeWidth="1.200" /></svg>MobileCont</Bookmark>
        <Bookmark $w={154}><svg width="16" height="16" viewBox="0 0 16 16"><circle cx="8" cy="8" r="7.700" fill="#4568b2" /><path d="M8 3l1.400 3.400 3.600.4-2.700 2.400.8 3.700L8 11l-3.100 1.900.8-3.700L3 6.800l3.600-.4z" fill="#fff" /></svg>Icon Archive - Sear...</Bookmark>
        <Bookmark $w={154}><svg width="16" height="16" viewBox="0 0 16 16"><rect width="16" height="16" rx="1" fill="#e09a26" /><text x="8" y="13.500" textAnchor="middle" textLength="15" lengthAdjust="spacingAndGlyphs" fontFamily="Liberation Sans, sans-serif" fontWeight="700" fontSize="15" fill="#fff">tw</text></svg>35+ Stunning Admi...</Bookmark>
        <Bookmark><svg width="16" height="16" viewBox="0 0 16 16"><rect width="16" height="16" rx="3" fill="#080808" /><text x="8" y="12" textAnchor="middle" textLength="13" lengthAdjust="spacingAndGlyphs" fontFamily="Liberation Sans, sans-serif" fontWeight="700" fontSize="11" fill="#fff">{"{w}"}</text></svg>Themes for Twitter...</Bookmark>
        <Spacer />
        <Bookmark $w={18}><svg width="9" height="7" viewBox="0 0 9 7" fill="none" stroke="#5f5f5f" strokeWidth="1.200"><path d="M1 .5l3 3-3 3M5 .5l3 3-3 3" /></svg></Bookmark>
        <Bookmark $w={133} $ls={0.17}><Folder />Otros marcadores</Bookmark>
      </Bookmarks>
    </>
  );
}

function PageContent() {
  return (
    <>
      <Navbar>
        <Brand><Logo w={60} h={45} /><BrandName>Noctem</BrandName><Version>v0.0.1-SNAPSHOT</Version></Brand>
        <NavLink $w={80}><G d={HOME} />Início</NavLink>
        <NavLink $w={124} $active><G d={LIST} />Entidades <Caret /></NavLink>
        <NavLink $w={100}><G d={USER} />Conta <Caret /></NavLink>
        <NavLink $w={152}><G d={TOWER} />Administração <Caret /></NavLink>
        <NavLink $w={104}><G d={FLAG} />Idioma <Caret /></NavLink>
      </Navbar>
      <Well>
        <Heading>Pagar Comandas</Heading>
        <Button $kind="primary"><G d={PLUS} />Criar novo Pagar Comanda</Button>
        <Table>
          <Row $head><span>Código</span><span>Pagamento</span></Row>
          <Row>
            <IdLink>1</IdLink><Cell>200</Cell>
            <Group>
              <Button $small $kind="primary">Editar</Button>
              <Button $small $kind="danger" $w={72}>
                <G w={12} h={12}><circle cx="6" cy="6" r="5" fill="none" stroke="#fff" strokeWidth="1.300" /><path d="M4 4l4 4M8 4L4 8" stroke="#fff" strokeWidth="1.600" /></G>
                Excluir
              </Button>
            </Group>
          </Row>
        </Table>
      </Well>
      <PageFooter>Este é o seu rodapé</PageFooter>
    </>
  );
}

function PaymentDialog() {
  return (
    <Backdrop>
      <Dialog>
        <DialogHeader><DialogTitle>Criar ou editar Pagar Comanda</DialogTitle><DialogClose>×</DialogClose></DialogHeader>
        <DialogBody>
          {fields.map((f) => (
            <Field key={f.label}>
              {f.label}
              <Control $readOnly={f.readOnly} $select={f.select}>
                {f.value}
                {f.select && <svg width="7" height="13" viewBox="0 0 7 13" fill="#4d4d4d"><path d="M3.500 0L6.700 5.200H.3zM3.500 12.500L.3 7.500h6.400z" /></svg>}
              </Control>
            </Field>
          ))}
        </DialogBody>
        <DialogFooter>
          <Button $w={99}><G><circle cx="7.500" cy="6.500" r="5.700" fill="none" stroke="#333" strokeWidth="1.900" /><path d="M3.500 10.500l8-8" stroke="#333" strokeWidth="1.900" /></G>Cancelar</Button>
          <Button $w={83} $kind="primary"><G d={SAVE} />Salvar</Button>
        </DialogFooter>
      </Dialog>
    </Backdrop>
  );
}

function Dock() {
  return (
    <DockArea>
      <DockShelf>
        {dock.map((d, i) => <DockItem key={i} $open={d.open}><DockIcon>{d.icon}</DockIcon></DockItem>)}
        <DockDivider />
        <DockItem $w={24}><DockIcon><path d="M0 2h7l1 1.500h12V18H0z" fill="#4fb1de" /><path d="M0 5h20v13H0z" fill="#6cc8ef" /><circle cx="10" cy="11.500" r="4" fill="none" stroke="#4aa5d0" /><path d="M10 9v4.500M8 11.800l2 2 2-2" stroke="#4aa5d0" fill="none" /></DockIcon></DockItem>
        <DockItem $w={24.5}><DockIcon><path d="M3 0h14v7H3z" fill="#eee" /><path d="M4 2h11" stroke="#bbb" /><path d="M.5 4h6l1 1.500h12V18H.5z" fill="#4fb1de" /><path d="M.5 7h19v11.500H.5z" fill="#6cc8ef" /></DockIcon></DockItem>
        <DockItem $w={25}><DockIcon><path d="M2 2h16l-2 17.500H4z" fill="#c7cbcb" /><path d="M5 5l2 13M9 5v13M12 5v13M15.500 5L14 18" stroke="#aab0b0" /><ellipse cx="10" cy="2.500" rx="8" ry="2.200" fill="#e9ecec" stroke="#8f9595" /><path d="M5 2l3-1.500L12 1l3 1-4 1.500z" fill="#4c8763" /></DockIcon></DockItem>
      </DockShelf>
    </DockArea>
  );
}

export default function App() {
  return (
    <>
      <GlobalStyle />
      <Desktop>
        <SystemMenu />
        <Window>
          <Tabs />
          <BrowserBars />
          <Viewport><PageContent /><PaymentDialog /></Viewport>
        </Window>
        <Dock />
      </Desktop>
    </>
  );
}
